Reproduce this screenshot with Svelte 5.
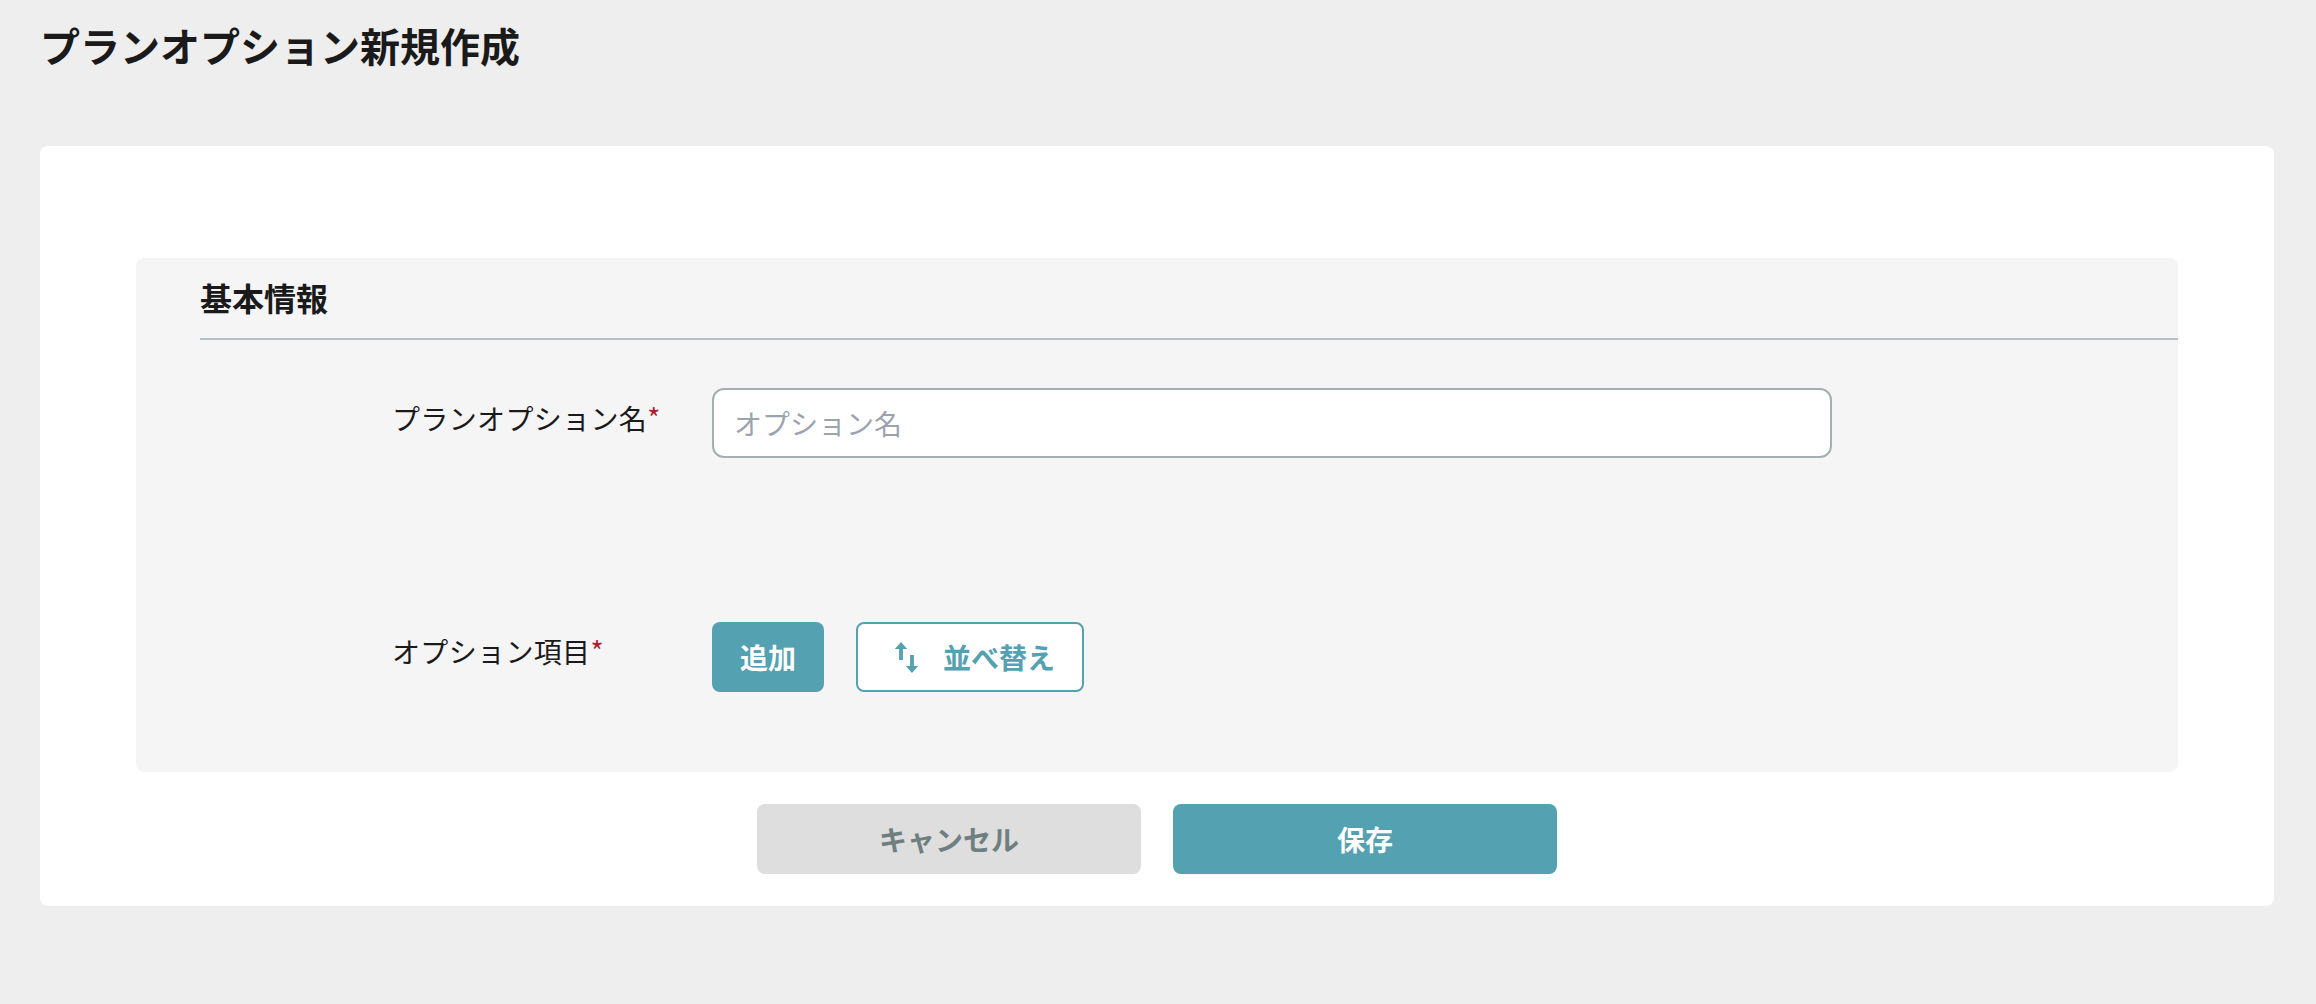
<script>
  const title = 'プランオプション新規作成';
</script>

<div class="page">
  <h1>{title}</h1>
  <main class="card">
    <section class="panel">
      <h2>基本情報</h2>
      <div class="row first">
        <div class="label">プランオプション名<span class="req">*</span></div>
        <input type="text" placeholder="オプション名" />
      </div>
      <div class="row second">
        <div class="label">オプション項目<span class="req">*</span></div>
        <div class="actions">
          <button class="btn add">追加</button>
          <button class="btn sort">
            <svg width="26" height="34" viewBox="0 0 26 34" aria-hidden="true">
              <path d="M6 2 L12.2 9 H7.9 V20 H4.1 V9 H-0.2 Z M17 33 L10.8 26 H15.1 V15 H18.9 V26 H23.2 Z" fill="currentColor" />
            </svg>
            <span>並べ替え</span>
          </button>
        </div>
      </div>
    </section>
    <div class="footer">
      <button class="btn wide cancel">キャンセル</button>
      <button class="btn wide save">保存</button>
    </div>
  </main>
</div>

<style>
  :global(body) {
    margin: 0;
    background: #eeeeee;
  }
  .page {
    height: 1004px;
    box-sizing: border-box;
    padding: 0 42px 0 40px;
    font-family: "Noto Sans CJK JP", "Noto Sans", sans-serif;
    color: #1a1a1a;
    overflow: hidden;
  }
  h1 {
    margin: 0;
    height: 146px;
    padding: 21px 0 0 0;
    box-sizing: border-box;
    font-size: 40px;
    line-height: 48px;
    font-weight: 700;
  }
  .card {
    background: #fff;
    border-radius: 8px;
    height: 760px;
    box-sizing: border-box;
    padding: 112px 96px 32px;
  }
  .panel {
    background: #f5f5f5;
    border-radius: 8px;
    height: 514px;
    box-sizing: border-box;
    padding-left: 64px;
  }
  h2 {
    margin: 0;
    height: 82px;
    box-sizing: border-box;
    padding-top: 15px;
    border-bottom: 2px solid #b4c0c2;
    font-size: 32px;
    line-height: 48px;
    font-weight: 700;
  }
  .row {
    display: flex;
    padding-left: 192px;
  }
  .first {
    margin-top: 48px;
    height: 70px;
  }
  .second {
    margin-top: 164px;
  }
  .label {
    width: 320px;
    flex: none;
    font-size: 28px;
    letter-spacing: 0.35px;
    line-height: 48px;
    padding-top: 6px;
    box-sizing: border-box;
  }
  .second .label {
    padding-top: 5px;
  }
  .req {
    color: #b01c2e;
    font-size: 28px;
    vertical-align: 1px;
    line-height: 1;
  }
  input {
    width: 1120px;
    height: 70px;
    box-sizing: border-box;
    border: 2px solid #a5aeb1;
    border-radius: 12px;
    background: #fff;
    padding: 0 20px;
    font: inherit;
    font-size: 28px;
    color: #1a1a1a;
    outline: none;
  }
  input::placeholder {
    color: #9ca3af;
    opacity: 1;
  }
  .actions {
    display: flex;
    gap: 32px;
  }
  .btn {
    height: 70px;
    box-sizing: border-box;
    border: 0;
    border-radius: 8px;
    font-family: inherit;
    font-size: 28px;
    font-weight: 700;
    padding: 0;
    display: flex;
    align-items: center;
    justify-content: center;
  }
  .add {
    width: 112px;
    background: #54a1b2;
    color: #fff;
  }
  .sort {
    width: 228px;
    background: #fff;
    color: #54a1b2;
    border: 2px solid #54a1b2;
    gap: 22px;
    padding-left: 10px;
  }
  .footer {
    display: flex;
    justify-content: center;
    gap: 32px;
    margin-top: 32px;
  }
  .wide {
    width: 384px;
  }
  .cancel {
    background: #dedede;
    color: #6f7f80;
  }
  .save {
    background: #54a1b2;
    color: #fff;
  }
</style>
